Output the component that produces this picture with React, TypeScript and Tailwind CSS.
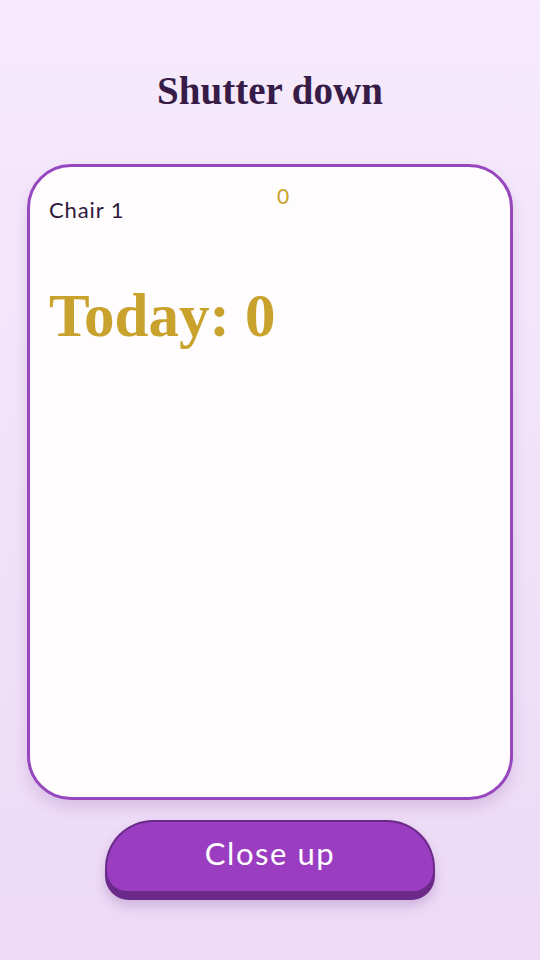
export default function App() {
  return (
    <div className="flex min-h-[960px] flex-col items-center bg-gradient-to-b from-[#f6eafc] to-[#ecdaf6] pt-[68px]">
      <h1 className="font-['Liberation_Serif','DejaVu_Serif',serif] text-[39px] font-bold leading-[46px] text-[#361c47]">
        Shutter down
      </h1>

      <div className="relative mt-[50px] h-[636px] w-[486px] rounded-[44px] border-[3px] border-[#9647bd] bg-[#fffcfe] px-[19px] pt-[29px] shadow-[0_8px_14px_rgba(120,60,150,0.18)]">
        <span className="absolute left-[247px] top-[13px] font-['Lato','Noto_Sans',sans-serif] text-[21px] text-[#c9a227]">
          0
        </span>
        <div className="font-['Lato','Noto_Sans',sans-serif] text-[22px] leading-[28px] tracking-[0.04em] text-[#2e1a3a]">
          Chair 1
        </div>
        <div className="mt-[56px] font-['Liberation_Serif','DejaVu_Serif',serif] text-[61px] font-bold leading-[72px] text-[#c8a22c]">
          Today: 0
        </div>
      </div>

      <button
        type="button"
        className="mt-[20px] w-[330px] rounded-t-[48px] rounded-b-[24px] bg-[#6b2a8a] p-[2px] pb-[9px] shadow-[0_6px_12px_rgba(120,60,150,0.25)]"
      >
        <span className="flex h-[69px] items-center justify-center rounded-t-[46px] rounded-b-[20px] bg-[#9a3dc1] pb-[6px] font-['Lato','Noto_Sans',sans-serif] text-[31px] tracking-[0.05em] text-white">
          Close up
        </span>
      </button>
    </div>
  );
}
